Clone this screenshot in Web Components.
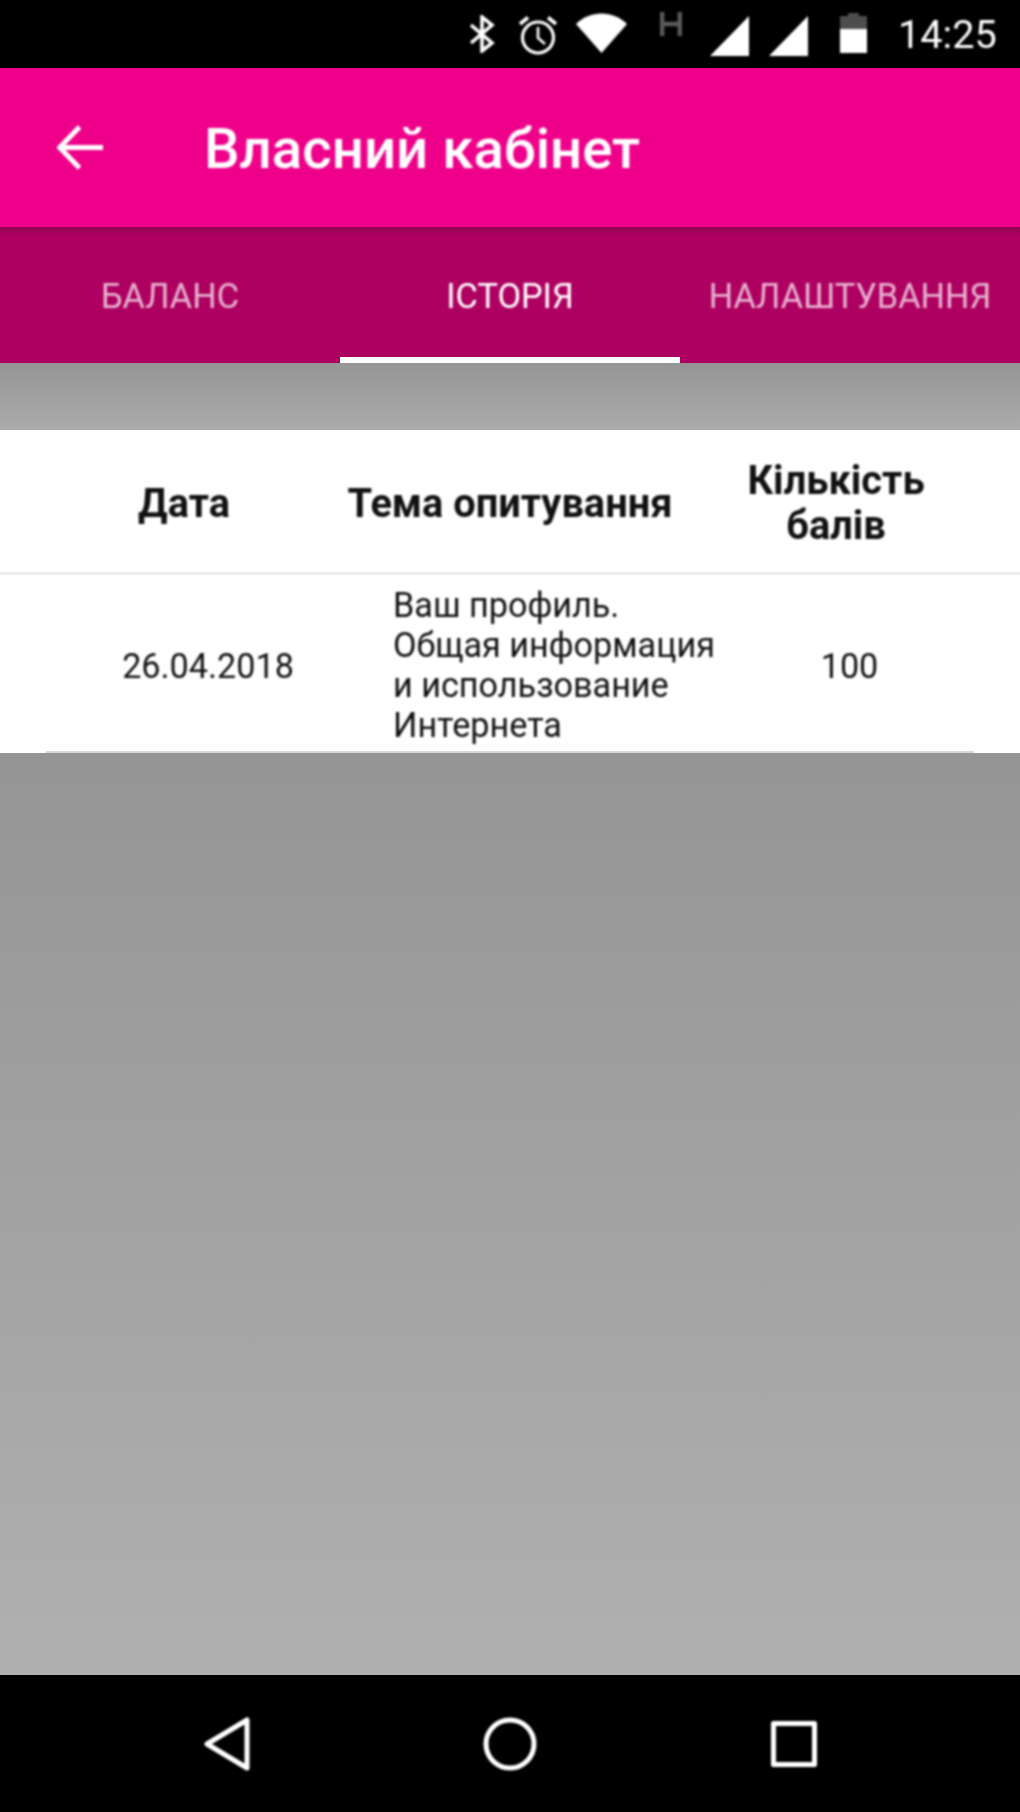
<!DOCTYPE html>
<html lang="uk">
<head>
<meta charset="utf-8">
<title>Власний кабінет</title>
<style>
  html, body { margin: 0; padding: 0; }
  body { width: 1020px; height: 1812px; overflow: hidden; font-family: Roboto, "Liberation Sans", sans-serif; }
  cabinet-screen { height: 1812px; }
</style>
</head>
<body>
<cabinet-screen>
  <status-bar slot="status" time="14:25"></status-bar>
  <app-bar slot="bar" title="Власний кабінет"></app-bar>
  <tab-strip slot="tabs">
    <tab-item>БАЛАНС</tab-item>
    <tab-item active>ІСТОРІЯ</tab-item>
    <tab-item>НАЛАШТУВАННЯ</tab-item>
  </tab-strip>
  <history-table slot="content">
    <history-row date="26.04.2018" points="100">Ваш профиль.<br>Общая информация<br>и использование<br>Интернета</history-row>
  </history-table>
  <nav-bar slot="nav"></nav-bar>
</cabinet-screen>

<script>
  // The reference is an upscaled capture, so text and icons get a slight blur
  const SOFT = "filter: blur(0.9px);";

  // Page frame: stacks the bars and lets the scrim area take the rest
  class CabinetScreen extends HTMLElement {
    constructor() {
      super();
      this.attachShadow({ mode: "open" });
      this.shadowRoot.innerHTML = `
        <style>
          :host { display: flex; flex-direction: column; width: 1020px; }
          .content { flex: 1; display: flex; flex-direction: column; min-height: 0; }
        </style>
        <slot name="status"></slot>
        <slot name="bar"></slot>
        <slot name="tabs"></slot>
        <div class="content"><slot name="content"></slot></div>
        <slot name="nav"></slot>
      `;
    }
  }

  class StatusBar extends HTMLElement {
    constructor() {
      super();
      this.attachShadow({ mode: "open" });
    }

    connectedCallback() {
      this.shadowRoot.innerHTML = `
        <style>
          :host {
            display: flex;
            align-items: flex-start;
            height: 68px;
            box-sizing: border-box;
            padding-left: 469px;
            background: #000;
            color: #fff;
          }
          svg { display: block; flex: none; ${SOFT} }
          .bt { width: 26px; height: 38px; margin-top: 15px; }
          .alarm { width: 40px; height: 40px; margin: 15px 0 0 23px; }
          .wifi { width: 51px; height: 40px; margin: 13px 0 0 18px; }
          .h { width: 22px; height: 24px; margin: 12px 0 0 33px; }
          .sig1 { width: 39px; height: 40px; margin: 16px 0 0 28px; }
          .sig2 { width: 39px; height: 40px; margin: 16px 0 0 20px; }
          .bat { width: 27px; height: 40px; margin: 13px 0 0 32px; }
          .time {
            margin-left: 31px;
            font: 400 39.7px/70px Roboto, sans-serif;
            white-space: nowrap;
            ${SOFT}
          }
        </style>
        <svg class="bt" viewBox="0 0 26 38" fill="none" stroke="#fff" stroke-width="3.6">
          <path d="M2 10 L23 28 L13 36 V2 L23 10 L2 28"/>
        </svg>
        <svg class="alarm" viewBox="0 0 40 40" fill="none" stroke="#fff" stroke-width="3.2">
          <circle cx="20" cy="22.5" r="15.5"/>
          <path d="M20 12 V23 L27 29" stroke-width="2.6"/>
          <path d="M2 9 L10 2.5 M38 9 L30 2.5" stroke-width="3.6"/>
        </svg>
        <svg class="wifi" viewBox="0 0 51 40"><path d="M0 11 C14 -3 37 -3 51 11 L25.5 40 Z" fill="#fff"/></svg>
        <svg class="h" viewBox="0 0 22 24" fill="none" stroke="#5a5a5a" stroke-width="4.4"><path d="M2.2 0 V24 M19.8 0 V24 M2.2 12 H19.8"/></svg>
        <svg class="sig1" viewBox="0 0 39 40"><path d="M39 0 V40 H0 Z" fill="#fff"/></svg>
        <svg class="sig2" viewBox="0 0 39 40"><path d="M39 0 V40 H0 Z" fill="#fff"/></svg>
        <svg class="bat" viewBox="0 0 27 40">
          <path d="M8 0 H19 V3 H27 V16 H0 V3 H8 Z" fill="#4d4d4d"/>
          <rect y="16" width="27" height="24" fill="#fff"/>
        </svg>
        <span class="time">${this.getAttribute("time")}</span>
      `;
    }
  }

  class AppBar extends HTMLElement {
    constructor() {
      super();
      this.attachShadow({ mode: "open" });
    }

    connectedCallback() {
      this.shadowRoot.innerHTML = `
        <style>
          :host {
            display: flex;
            align-items: center;
            height: 159px;
            box-sizing: border-box;
            padding-left: 57px;
            background: #ee008a;
            color: #fff;
          }
          svg { width: 46px; height: 45px; flex: none; ${SOFT} }
          h1 {
            margin: 4px 0 0 101px;
            font: 500 56.4px/1 Roboto, sans-serif;
            white-space: nowrap;
            ${SOFT}
          }
        </style>
        <svg viewBox="0 0 46 45" fill="none" stroke="#fff" stroke-width="4.8">
          <path d="M46 22.5 H4 M22.5 2 L2.6 22.5 L22.5 43"/>
        </svg>
        <h1>${this.getAttribute("title")}</h1>
      `;
    }
  }

  class TabStrip extends HTMLElement {
    constructor() {
      super();
      this.attachShadow({ mode: "open" });
      this.shadowRoot.innerHTML = `
        <style>
          :host {
            display: grid;
            grid-template-columns: repeat(3, 1fr);
            height: 136px;
            background: linear-gradient(#91004f, #ae0061 8px);
          }
        </style>
        <slot></slot>
      `;
    }
  }

  class TabItem extends HTMLElement {
    constructor() {
      super();
      this.attachShadow({ mode: "open" });
      this.shadowRoot.innerHTML = `
        <style>
          :host {
            display: flex;
            align-items: center;
            justify-content: center;
            box-sizing: border-box;
            padding-top: 9px;
            border-bottom: 6px solid transparent;
            font: 400 34.3px/1 Roboto, sans-serif;
            color: rgba(255, 255, 255, 0.7);
            white-space: nowrap;
          }
          :host([active]) {
            color: #fff;
            border-bottom-color: #fff;
          }
          span { ${SOFT} }
        </style>
        <span><slot></slot></span>
      `;
    }
  }

  class HistoryTable extends HTMLElement {
    constructor() {
      super();
      this.attachShadow({ mode: "open" });
      this.shadowRoot.innerHTML = `
        <style>
          :host {
            display: flex;
            flex-direction: column;
            flex: 1;
            min-height: 0;
            color: #111;
          }
          .top { height: 67px; background: linear-gradient(#959595, #ababab); }
          .head {
            display: grid;
            grid-template-columns: repeat(3, 326px);
            justify-content: center;
            align-items: center;
            height: 142px;
            background: #fff;
            border-bottom: 3px solid #eee;
            font: 700 39.8px/45px Roboto, sans-serif;
            text-align: center;
          }
          .head div { position: relative; top: 2px; ${SOFT} }
          .rows { background: #fff; }
          .rest { flex: 1; background: linear-gradient(#959595, #b0b0b0); }
        </style>
        <div class="top"></div>
        <div class="head">
          <div>Дата</div>
          <div>Тема опитування</div>
          <div>Кількість<br>балів</div>
        </div>
        <div class="rows"><slot></slot></div>
        <div class="rest"></div>
      `;
    }
  }

  class HistoryRow extends HTMLElement {
    constructor() {
      super();
      this.attachShadow({ mode: "open" });
    }

    connectedCallback() {
      this.shadowRoot.innerHTML = `
        <style>
          :host {
            display: grid;
            grid-template-columns: 324px 355px 249px;
            align-items: center;
            height: 178px;
            box-sizing: border-box;
            margin: 0 46px;
            padding-top: 4px;
            border-bottom: 2px solid #d8d8d8;
            font: 400 34.2px/40px Roboto, sans-serif;
          }
          .c { padding-top: 2px; text-align: center; ${SOFT} }
          .topic { padding-left: 23px; white-space: nowrap; ${SOFT} }
        </style>
        <div class="c">${this.getAttribute("date")}</div>
        <div class="topic"><slot></slot></div>
        <div class="c">${this.getAttribute("points")}</div>
      `;
    }
  }

  class NavBar extends HTMLElement {
    constructor() {
      super();
      this.attachShadow({ mode: "open" });
      this.shadowRoot.innerHTML = `
        <style>
          :host {
            display: grid;
            grid-template-columns: repeat(3, 283.5px);
            justify-content: center;
            align-items: center;
            justify-items: center;
            height: 137px;
            background: #000;
          }
          svg { width: 56px; height: 56px; display: block; ${SOFT} }
        </style>
        <svg viewBox="0 0 56 56" fill="none" stroke="#fff" stroke-width="5" stroke-linejoin="round">
          <path d="M8 28 L48 4 V52 Z"/>
        </svg>
        <svg viewBox="0 0 56 56" fill="none" stroke="#fff" stroke-width="5">
          <circle cx="28" cy="28" r="24"/>
        </svg>
        <svg viewBox="0 0 56 56" fill="none" stroke="#fff" stroke-width="5" stroke-linejoin="round">
          <rect x="7.5" y="7.5" width="41" height="41"/>
        </svg>
      `;
    }
  }

  customElements.define("cabinet-screen", CabinetScreen);
  customElements.define("status-bar", StatusBar);
  customElements.define("app-bar", AppBar);
  customElements.define("tab-strip", TabStrip);
  customElements.define("tab-item", TabItem);
  customElements.define("history-table", HistoryTable);
  customElements.define("history-row", HistoryRow);
  customElements.define("nav-bar", NavBar);
</script>
</body>
</html>
